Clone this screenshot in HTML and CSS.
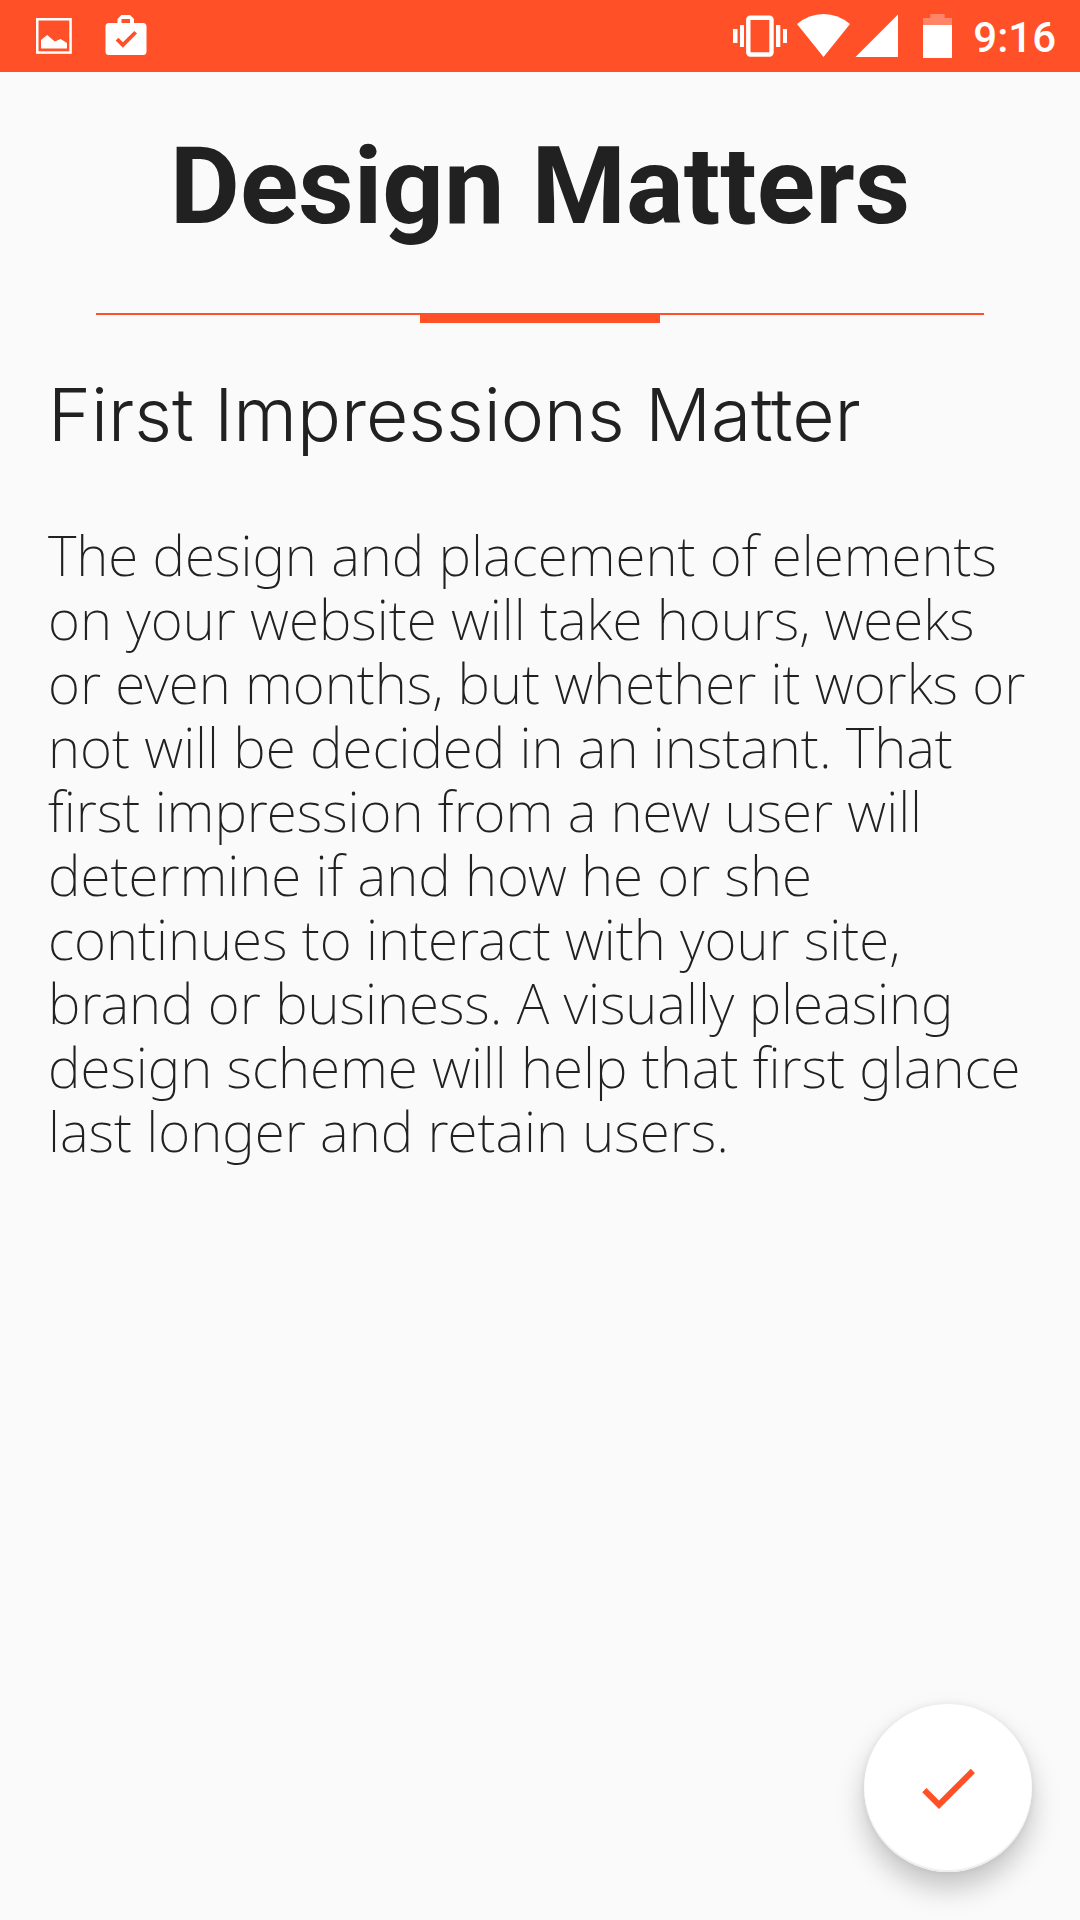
FILE: index.html
```html
<!DOCTYPE html>
<html lang="en">
<head>
<meta charset="utf-8">
<meta name="viewport" content="width=device-width, initial-scale=1">
<title>Design Matters</title>
<link rel="stylesheet" href="styles.css">
</head>
<body>
<header class="status-bar">
  <div class="status-group">
    <svg class="status-icon" width="36" height="72" viewBox="0 0 36 72" aria-hidden="true">
      <rect x="1.25" y="19.25" width="33.3" height="33.3" fill="none" stroke="#fff" stroke-width="2.5"/>
      <path d="M5 40l6.200-5 7.600 6.500 5.800-2.500 6.400 4v5.600H5z"/>
    </svg>
    <svg class="status-icon" width="44" height="72" viewBox="0 0 44 72" aria-hidden="true">
      <path fill-rule="evenodd" d="M5 23h8.500v-4l4-4h8.500l4 4v4h9q3.500 0 3.500 3.500v25q0 3.500-3.500 3.500H5q-3.500 0-3.500-3.500v-25Q1.500 23 5 23zM17.500 23h8.500v-4h-8.500zM11.700 40.500l7.200 7.200 14.100-14.100-2.700-2.700-11.400 11.300-4.500-4.500z"/>
    </svg>
  </div>
  <div class="status-group status-group-end">
    <svg class="status-icon" width="58" height="72" viewBox="0 0 58 72" aria-hidden="true">
      <rect x="15.300" y="17.700" width="23.200" height="36.800" rx="2" fill="none" stroke="#fff" stroke-width="4.400"/>
      <path d="M0 29h4.500v14H0zM7 25h4v22H7zM43 25h4.300v22H43zM50 29h4v14h-4z"/>
    </svg>
    <svg class="status-icon" width="62" height="72" viewBox="0 0 62 72" aria-hidden="true">
      <path d="M32.500 57L6 24Q18 14 32.500 14T59 24z"/>
    </svg>
    <svg class="status-icon" width="52" height="72" viewBox="0 0 52 72" aria-hidden="true">
      <path d="M2.500 57H45V14.500z"/>
    </svg>
    <svg class="status-icon" width="68" height="72" viewBox="0 0 68 72" aria-hidden="true">
      <path fill-opacity=".3" d="M18 25v-7h7.300v-4h14.400v4H47v7z"/>
      <path d="M18 25h29v33H18z"/>
    </svg>
    <time class="clock">9:16</time>
  </div>
</header>
<main class="page">
  <h1 class="title">Design Matters</h1>
  <div class="divider"></div>
  <h2 class="subtitle">First Impressions Matter</h2>
  <p class="copy">The design and placement of elements on your website will take hours, weeks or even months, but whether it works or not will be decided in an instant. That first impression from a new user will determine if and how he or she continues to interact with your site, brand or business. A visually pleasing design scheme will help that first glance last longer and retain users.</p>
</main>
<button class="fab" type="button" aria-label="Done">
  <svg width="72" height="72" viewBox="0 0 24 24" aria-hidden="true">
    <path fill="#ff5028" d="M9 16.170L4.830 12l-1.420 1.410L9 19 21 7l-1.410-1.410z"/>
  </svg>
</button>
</body>
</html>
```

FILE: styles.css
```css
body {
  margin: 0;
  min-height: 100vh;
  background: #fafafa;
  color: #212121;
  font-family: Roboto, sans-serif;
}

.status-bar {
  display: flex;
  justify-content: space-between;
  height: 72px;
  padding: 0 24px 0 36px;
  background: #ff5028;
  color: #fff;
}

.status-group {
  display: flex;
  gap: 32px;
}

.status-group-end {
  gap: 0;
}

.status-icon {
  display: block;
  fill: #fff;
}

.clock {
  padding-top: 2px;
  font-size: 42px;
  font-weight: 500;
  line-height: 72px;
}

.page {
  padding: 50px 48px;
}

.title {
  margin: 0;
  font-size: 108px;
  font-weight: 700;
  line-height: 128px;
  text-align: center;
}

.divider {
  height: 10px;
  margin: 63px 48px 0;
  background:
    linear-gradient(#ff5028, #ff5028) center top / 240px 10px no-repeat,
    linear-gradient(#ff5028, #ff5028) left top / 100% 2px no-repeat;
}

.subtitle {
  margin: 44px 0 0;
  font-family: Inter, sans-serif;
  font-size: 73px;
  font-weight: 300;
  line-height: 96px;
}

.copy {
  margin: 60px 0 0;
  font-family: "Noto Sans", sans-serif;
  font-size: 55px;
  font-weight: 200;
  line-height: 64px;
}

.fab {
  position: fixed;
  right: 48px;
  bottom: 48px;
  display: flex;
  align-items: center;
  justify-content: center;
  width: 168px;
  height: 168px;
  padding: 0;
  border: 0;
  border-radius: 50%;
  background: #fff;
  box-shadow: inset 0 -2px 1px #eee, 0 16px 28px rgba(0, 0, 0, .22), 0 0 8px rgba(0, 0, 0, .08);
}
```
